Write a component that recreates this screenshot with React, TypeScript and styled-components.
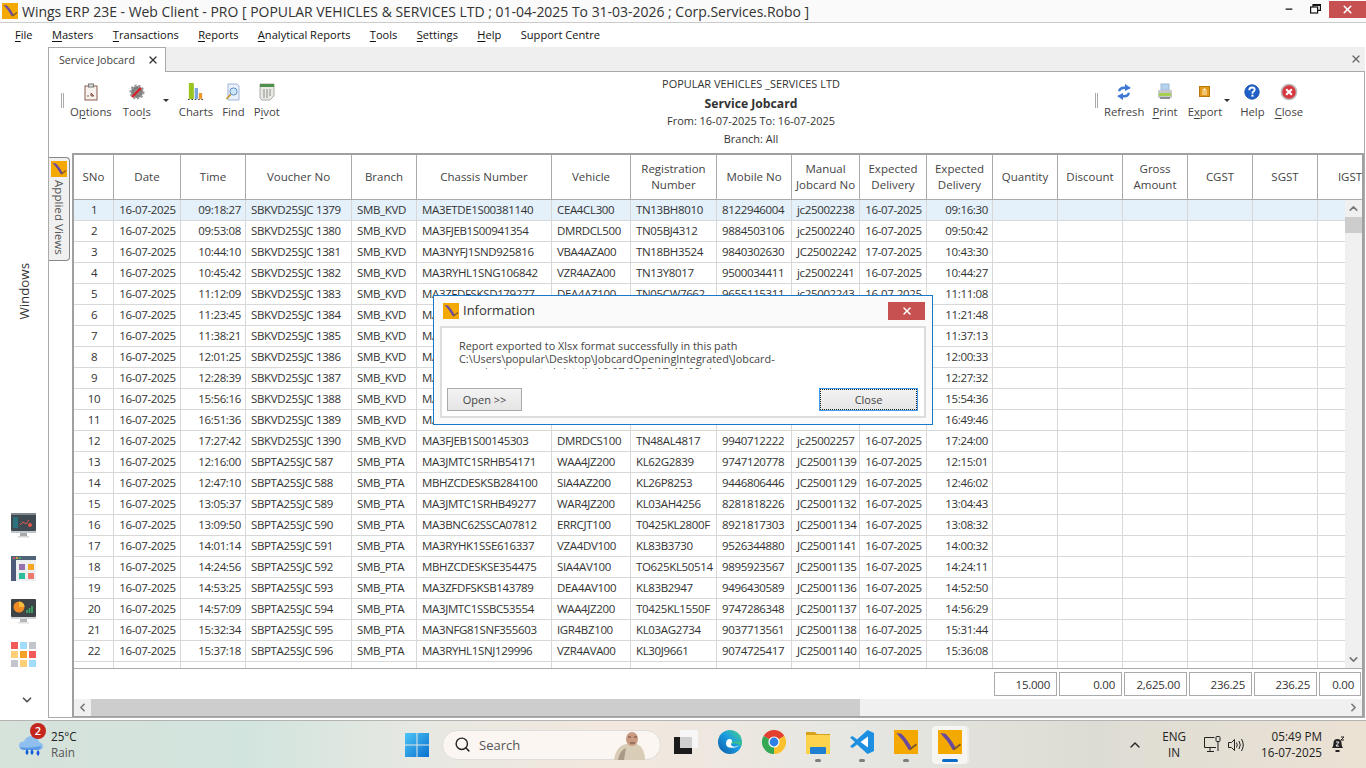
import React from 'react'
import styled, { createGlobalStyle } from 'styled-components'
import { ChevronUp, ChevronDown, ChevronLeft, ChevronRight, X, Minus, Search } from 'lucide-react'

const FONT = `"Open Sans", "Noto Sans", sans-serif`
const COLUMNS = '40px 67px 65px 106px 65px 135px 79px 86px 75px 68px 67px 66px 65px 65px 65px 65px 65px 65px'

const GlobalStyle = createGlobalStyle`
    html, body {
        margin: 0;
        padding: 0;
        background: #fff;
        overflow: hidden;
    }
    * {
        box-sizing: border-box;
    }
`

const Screen = styled.div`
    position: relative;
    width: 1366px;
    height: 768px;
    display: flex;
    flex-direction: column;
    overflow: hidden;
    font-family: ${FONT};
    font-size: 11.5px;
    color: #333;
    background: #fff;
`

const TitleBar = styled.div`
    height: 23px;
    flex: none;
    display: flex;
    align-items: center;
    background: #fafafa;
    border-bottom: 1px solid #ccc;
    padding-left: 2px;
`

const WindowTitle = styled.div`
    margin-left: 4px;
    font-size: 13.96px;
    color: #333;
    white-space: nowrap;
    flex: 1;
`

const WindowControl = styled.div<{ $close?: boolean }>`
    display: flex;
    align-items: center;
    justify-content: center;
    height: 17px;
    margin-top: ${({ $close }) => ($close ? '-3px' : '-4px')};
    width: ${({ $close }) => ($close ? '37px' : '27px')};
    background: ${({ $close }) => ($close ? '#c75050' : 'transparent')};
    color: ${({ $close }) => ($close ? '#fff' : '#111')};
`

const MenuBar = styled.div`
    height: 24px;
    flex: none;
    display: flex;
    align-items: center;
    gap: 19.4px;
    padding: 0 0 2px 15px;
    background: #fff;
    font-size: 11.1px;
    color: #111;
`

const Key = styled.span`
    text-decoration: underline;
    text-underline-offset: 2px;
`

const Body = styled.div`
    flex: none;
    height: 673px;
    display: flex;
    padding-bottom: 2px;
`

const SideBar = styled.div`
    width: 48px;
    flex: none;
    display: flex;
    flex-direction: column;
    align-items: center;
    padding-top: 216px;
`

const WindowsLabel = styled.div`
    writing-mode: vertical-rl;
    transform: rotate(180deg);
    font-size: 13.3px;
    color: #333;
`

const SideIcons = styled.div`
    margin-top: 193px;
    display: flex;
    flex-direction: column;
    gap: 18px;
    margin-right: 1px;
`

const SideChevron = styled.div`
    margin-top: 26px;
    margin-left: 6px;
    color: #555;
    height: 14px;
`

const Main = styled.div`
    width: 1317px;
    flex: none;
    display: flex;
    flex-direction: column;
    border-left: 1px solid #aaa;
    border-right: 1px solid #aaa;
    border-bottom: 1px solid #aaa;
`

const TabStrip = styled.div`
    height: 25px;
    flex: none;
    display: flex;
    align-items: stretch;
    justify-content: space-between;
    background: #efefef;
    border-bottom: 1px solid #aaa;
    margin-left: -1px;
    margin-right: -1px;
`

const Tab = styled.div`
    width: 118px;
    height: 25px;
    display: flex;
    align-items: center;
    justify-content: space-between;
    padding: 0 6px 0 10px;
    background: #fff;
    border: 1px solid #aaa;
    border-bottom: none;
    font-size: 10.7px;
    color: #444;
`

const TabStripClose = styled.div`
    display: flex;
    align-items: center;
    padding-right: 3px;
    color: #666;
`

const Toolbar = styled.div`
    height: 81px;
    flex: none;
    display: grid;
    grid-template-columns: 500px 404px 1fr;
`

const ToolGroup = styled.div<{ $inset: number }>`
    display: flex;
    align-items: flex-start;
    gap: 9px;
    padding-left: ${({ $inset }) => $inset}px;
    padding-top: 11px;
`

const Grip = styled.div`
    width: 3px;
    height: 15px;
    margin-top: 10px;
    margin-right: -3px;
    border-left: 1px solid #aaa;
    border-right: 1px solid #aaa;
`

const ToolButton = styled.div<{ $caret?: number; $after?: number }>`
    display: flex;
    flex-direction: column;
    align-items: center;
    gap: 3px;
    margin-right: ${({ $caret, $after }) => ($caret ? `${$caret + 1}px` : `${$after ?? 0}px`)};
    position: relative;
    font-size: 11.3px;
    color: #444;
    white-space: nowrap;

    &::after {
        content: "";
        display: ${({ $caret }) => ($caret ? 'block' : 'none')};
        position: absolute;
        right: ${({ $caret }) => -($caret ?? 0)}px;
        top: 16px;
        border-left: 3px solid transparent;
        border-right: 3px solid transparent;
        border-top: 3px solid #333;
    }
`

const ReportHead = styled.div`
    display: flex;
    flex-direction: column;
    align-items: center;
    padding-top: 3px;
    line-height: 18px;
    font-size: 10.95px;
    color: #333;
`

const ReportName = styled.div`
    font-size: 12.2px;
    font-weight: 700;
    line-height: 16px;
    padding-top: 3px;
    color: #333;
`

const Workspace = styled.div`
    flex: 1;
    min-height: 0;
    display: flex;
`

const Rail = styled.div`
    width: 23px;
    flex: none;
    padding-top: 4px;
`

const AppliedViews = styled.div`
    width: 21px;
    height: 104px;
    display: flex;
    flex-direction: column;
    align-items: center;
    gap: 3px;
    padding-top: 3px;
    background: #f0f0f0;
    border: 1px solid #888;
    border-left: none;
    border-radius: 0 4px 4px 0;
    font-size: 11.6px;
    color: #555;
`

const VerticalText = styled.span`
    writing-mode: vertical-rl;
    white-space: nowrap;
`

const GridBox = styled.div`
    flex: 1;
    min-width: 0;
    display: flex;
    flex-direction: column;
    border: 2px solid #a0a0a0;
    border-bottom-width: 1px;
`

const HeaderRow = styled.div`
    height: 45px;
    flex: none;
    display: grid;
    grid-template-columns: ${COLUMNS};
    overflow: hidden;
    border-bottom: 1px solid #aaa;
`

const HeaderCell = styled.div`
    display: flex;
    align-items: center;
    justify-content: center;
    text-align: center;
    line-height: 16px;
    border-right: 1px solid #aaa;
    color: #444;
    white-space: pre-line;
`

const RowsArea = styled.div`
    height: 469px;
    flex: none;
    display: flex;
    border-bottom: 1px solid #aaa;
`

const RowsViewport = styled.div`
    flex: 1;
    min-width: 0;
    overflow: hidden;
`

const Row = styled.div<{ $selected?: boolean }>`
    height: 21px;
    display: grid;
    grid-template-columns: ${COLUMNS};
    background: ${({ $selected }) => ($selected ? '#e4f0fa' : '#fff')};
    border-bottom: 1px solid #d8d8d8;
`

const Cell = styled.div<{ $align: string }>`
    display: flex;
    align-items: center;
    justify-content: ${({ $align }) => $align};
    padding: 0 4px 2px 5px;
    border-right: 1px solid #d8d8d8;
    color: #333;
    letter-spacing: -0.35px;
    white-space: nowrap;
    overflow: hidden;
`

const VScroll = styled.div`
    width: 17px;
    flex: none;
    display: flex;
    flex-direction: column;
    background: #f0f0f0;
`

const ScrollEnd = styled.div`
    width: 17px;
    height: 17px;
    flex: none;
    display: flex;
    align-items: center;
    justify-content: center;
    color: #777;
`

const VThumb = styled.div`
    height: 16px;
    flex: none;
    background: #cdcdcd;
`

const ScrollGap = styled.div`
    flex: 1;
`

const TotalsRow = styled.div`
    height: 30px;
    flex: none;
    display: grid;
    grid-template-columns: ${COLUMNS};
    align-items: start;
    padding-top: 3px;
    overflow: hidden;
`

const TotalBox = styled.div<{ $column: number; $narrow?: boolean }>`
    grid-column: ${({ $column }) => $column};
    height: 24px;
    margin: 0 1px;
    width: ${({ $narrow }) => ($narrow ? '42px' : 'auto')};
    display: flex;
    align-items: center;
    justify-content: flex-end;
    padding-right: 6px;
    border: 1px solid #aaa;
    color: #333;
    letter-spacing: -0.25px;
`

const HScroll = styled.div`
    height: 17px;
    flex: none;
    display: flex;
    background: #f0f0f0;
`

const HThumb = styled.div`
    width: 769px;
    flex: none;
    background: #cdcdcd;
`

const Taskbar = styled.div`
    height: 48px;
    flex: none;
    display: grid;
    grid-template-columns: 405px 570px 1fr;
    align-items: center;
    border-top: 1px solid #b4b4b4;
    background: linear-gradient(90deg, #d6e2da 0%, #d2e4de 18%, #e6e8e2 30%, #f3e8de 45%, #e6e7e2 62%, #dddcd4 80%, #ece2d4 100%);
`

const Weather = styled.div`
    display: flex;
    align-items: center;
    gap: 8px;
    padding: 0 0 2px 19px;
    font-size: 11.7px;
    line-height: 16px;
    color: #222;
`

const WeatherIcon = styled.div`
    position: relative;
    width: 24px;
    height: 22px;
    margin-top: 4px;
`

const Badge = styled.div`
    position: absolute;
    left: 11px;
    top: -12px;
    width: 16px;
    height: 16px;
    border-radius: 50%;
    background: #c4261d;
    color: #fff;
    font-size: 11px;
    font-weight: 600;
    line-height: 16px;
    text-align: center;
`

const Muted = styled.div`
    color: #555;
`

const CenterIcons = styled.div`
    display: flex;
    align-items: center;
`

const SearchPill = styled.div`
    position: relative;
    flex: none;
    width: 219px;
    height: 30px;
    margin: 0 3px 0 13px;
    display: flex;
    align-items: center;
    gap: 8px;
    padding-left: 11px;
    border: 1px solid #ddd;
    border-radius: 15px;
    background: #fbf6f1;
    font-size: 13px;
    color: #555;
`

const SearchArt = styled.div`
    position: absolute;
    right: 14px;
    top: 1px;
`

const TaskSlot = styled.div<{ $active?: boolean }>`
    position: relative;
    flex: none;
    width: 44px;
    height: 38px;
    display: flex;
    align-items: center;
    justify-content: center;
    padding-bottom: 6px;

    &::before {
        content: "";
        display: ${({ $active }) => ($active ? 'block' : 'none')};
        position: absolute;
        left: 4px;
        right: 5px;
        top: 0;
        bottom: 0;
        background: #f6f5f2;
        border-radius: 4px;
        box-shadow: 2px 0 0 #eeede9;
    }

    svg {
        position: relative;
    }
`

const RunDot = styled.div<{ $active?: boolean }>`
    position: absolute;
    bottom: 2px;
    left: 50%;
    transform: translateX(-50%);
    height: 3px;
    width: ${({ $active }) => ($active ? '16px' : '6px')};
    border-radius: 2px;
    background: ${({ $active }) => ($active ? '#0a6cc9' : '#7d7d7d')};
`

const Tray = styled.div`
    display: flex;
    align-items: center;
    justify-content: flex-end;
    padding-right: 21px;
    font-size: 11.7px;
    color: #222;
`

const TrayColumn = styled.div<{ $align: string; $gap: number }>`
    display: flex;
    flex-direction: column;
    align-items: ${({ $align }) => $align};
    line-height: 16px;
    padding-bottom: 2px;
    margin-left: ${({ $gap }) => $gap}px;
`

const TrayIcon = styled.div<{ $gap: number }>`
    display: flex;
    margin-left: ${({ $gap }) => $gap}px;
`

const Dialog = styled.div`
    position: absolute;
    left: 433px;
    top: 295px;
    width: 500px;
    height: 130px;
    display: flex;
    flex-direction: column;
    background: #fafafa;
    border: 1px solid #1a78c8;
    padding: 6px 6px 6px 6px;
`

const DialogTitle = styled.div`
    height: 18px;
    flex: none;
    display: flex;
    align-items: center;
    gap: 4px;
    padding-left: 3px;
    font-size: 13px;
    color: #333;
`

const DialogTitleText = styled.div`
    flex: 1;
    padding-bottom: 2px;
`

const DialogClose = styled.div`
    width: 37px;
    height: 18px;
    margin-right: 1px;
    display: flex;
    align-items: center;
    justify-content: center;
    background: #c75050;
    color: #fff;
`

const DialogBody = styled.div`
    flex: 1;
    margin-top: 6px;
    display: flex;
    flex-direction: column;
    background: #fff;
    border: 2px solid #ddd;
    padding: 11px 5px 5px 5px;
`

const DialogText = styled.div`
    height: 30px;
    margin-left: 12px;
    overflow: hidden;
    line-height: 13px;
    font-size: 10.85px;
    color: #444;
    white-space: nowrap;
`

const DialogActions = styled.div`
    display: flex;
    justify-content: space-between;
    margin-top: auto;
`

const DialogButton = styled.div<{ $focused?: boolean }>`
    position: relative;
    height: 23px;
    width: ${({ $focused }) => ($focused ? '99px' : '75px')};
    display: flex;
    align-items: center;
    justify-content: center;
    margin-right: ${({ $focused }) => ($focused ? '1px' : '0')};
    border: 1px solid ${({ $focused }) => ($focused ? '#3f9bf0' : '#aaa')};
    background: linear-gradient(#f3f3f3, #e5e5e5);
    outline: ${({ $focused }) => ($focused ? '1px dotted #222' : 'none')};
    outline-offset: ${({ $focused }) => ($focused ? '-2px' : '0')};
    font-size: 11px;
    color: #444;
`

const WingsLogo = ({ size }: { size: number }) => (
    <svg width={size} height={size} viewBox="0 0 16 16" style={{ flex: 'none' }}>
        <rect width="16" height="16" fill="#f3a900" />
        <path d="M1.5 2 L5 2.5 Q9.5 7 12 12.5 L10 13.5 Q6.5 7 1.5 2Z" fill="#6a4a9d" />
        <path d="M10.5 13 L15 9.5" stroke="#7d5a2a" strokeWidth="1.2" fill="none" />
    </svg>
)

const OptionsIcon = () => (
    <svg width="16" height="18" viewBox="0 0 16 18">
        <rect x="2" y="3" width="12" height="14" fill="#f7f2ee" stroke="#8a5a50" />
        <rect x="5.5" y="1" width="5" height="3" fill="#ddd" stroke="#777" />
        <path d="M4 13h2M8 10l3 3H8z" stroke="#8a5a50" fill="#b88" />
    </svg>
)

const ToolsIcon = () => (
    <svg width="18" height="18" viewBox="0 0 18 18">
        <circle cx="9" cy="9" r="6" fill="#777" stroke="#999" strokeWidth="3" strokeDasharray="2 1.6" />
        <circle cx="9" cy="9" r="3.5" fill="#8a8a8a" />
        <path d="M4 14 L13 5" stroke="#d8232a" strokeWidth="2.4" />
    </svg>
)

const ChartsIcon = () => (
    <svg width="15" height="18" viewBox="0 0 18 18" preserveAspectRatio="none">
        <rect x="1" y="0" width="6" height="16" fill="#9cc41f" />
        <rect x="8" y="5" width="4" height="11" fill="#7ea6de" />
        <rect x="13" y="10" width="4" height="6" fill="#ef9a2a" />
        <path d="M0 16.5h18" stroke="#333" strokeDasharray="2 2" />
    </svg>
)

const FindIcon = () => (
    <svg width="16" height="18" viewBox="0 0 16 18">
        <path d="M3 1h9l2 2v14H3z" fill="#eaf1fb" stroke="#9fb6d8" />
        <circle cx="8.5" cy="8.5" r="3.6" fill="#cfe6f8" stroke="#5f8fc9" />
        <path d="M5.6 11.4 L1.5 16" stroke="#c9962f" strokeWidth="1.6" />
    </svg>
)

const PivotIcon = () => (
    <svg width="16" height="18" viewBox="0 0 16 18">
        <path d="M1 1h14v12l-4 4H3l-2-2z" fill="#e9e9e3" stroke="#aaa" />
        <rect x="1" y="1" width="14" height="3" fill="#4f8f4c" />
        <path d="M5 6v9M8 6v9M11 6v7" stroke="#8a8a8a" />
    </svg>
)

const RefreshIcon = () => (
    <svg width="16" height="18" viewBox="0 0 16 18">
        <path d="M2 8 Q3 3 9 3.5 L9 1 L15 5 L9 8 L9 6 Q5 5.5 4 8.5Z" fill="#3f78d6" />
        <path d="M14 10 Q13 15 7 14.5 L7 17 L1 13 L7 10 L7 12 Q11 12.5 12 9.5Z" fill="#3f78d6" />
    </svg>
)

const PrintIcon = () => (
    <svg width="16" height="18" viewBox="0 0 16 18">
        <rect x="4" y="1" width="8" height="6" fill="#b5d2ee" stroke="#9db9d4" />
        <rect x="1" y="7" width="14" height="8" rx="1" fill="#c4c8cc" />
        <rect x="2" y="10" width="12" height="3" fill="#a8d050" />
        <rect x="3" y="14" width="10" height="2" fill="#8b8f93" />
    </svg>
)

const ExportIcon = () => (
    <svg width="14" height="18" viewBox="0 0 14 18">
        <rect x="1.5" y="3.5" width="10" height="10" fill="#e29b1f" stroke="#b97710" />
        <path d="M6.5 5l2.5 2.5h-5z" fill="#fff3cf" />
        <path d="M4 9h5M4 11h5" stroke="#fff3cf" />
    </svg>
)

const HelpIcon = () => (
    <svg width="18" height="18" viewBox="-1 -1 20 20">
        <circle cx="9" cy="9" r="8" fill="#1f5fc9" stroke="#184ea6" />
        <path d="M6 7 Q6 4 9 4 Q12 4 12 6.5 Q12 8 9.6 9.3 V11" stroke="#fff" strokeWidth="2" fill="none" />
        <rect x="8.4" y="12" width="2.2" height="2.2" fill="#fff" />
    </svg>
)

const CloseIcon = () => (
    <svg width="18" height="18" viewBox="-.5 -.5 19 19">
        <circle cx="9" cy="9" r="8" fill="#d7383f" stroke="#bdbdbd" strokeWidth="1.6" />
        <path d="M6 6l6 6M12 6l-6 6" stroke="#fff" strokeWidth="2.2" />
    </svg>
)

const DashMonitor = () => (
    <svg width="25" height="25" viewBox="0 0 25 25">
        <rect x="0" y="0" width="25" height="18" rx="1" fill="#3f4a52" />
        <rect x="0" y="0" width="25" height="2" fill="#7d878d" />
        <rect x="2" y="4" width="5" height="11" fill="#2c6f7d" />
        <path d="M9 12l3-3 3 2 3-4" stroke="#e2584a" fill="none" />
        <circle cx="19" cy="12" r="2" fill="#e2584a" />
        <rect x="0" y="18" width="25" height="2" fill="#c4c8ca" />
        <rect x="9" y="20" width="7" height="3" fill="#a7abad" />
        <rect x="7" y="23" width="11" height="1.5" fill="#d3d5d6" />
    </svg>
)

const AppWindow = () => (
    <svg width="25" height="25" viewBox="0 0 25 25">
        <rect x="0" y="0" width="25" height="25" fill="#eceeef" />
        <rect x="0" y="0" width="25" height="4" fill="#4f6476" />
        <rect x="0" y="4" width="5" height="21" fill="#4b5a7a" />
        <circle cx="3" cy="2" r="1" fill="#ef5350" />
        <circle cx="6" cy="2" r="1" fill="#f4b42d" />
        <circle cx="9" cy="2" r="1" fill="#54b36a" />
        <rect x="8" y="8" width="6" height="6" fill="#9671ad" />
        <rect x="17" y="8" width="6" height="6" fill="#f5a623" />
        <rect x="8" y="17" width="6" height="6" fill="#2dbd9b" />
        <rect x="17" y="17" width="6" height="6" fill="#f0776c" />
    </svg>
)

const PieMonitor = () => (
    <svg width="25" height="25" viewBox="0 0 25 25">
        <rect x="0" y="0" width="25" height="18" rx="1" fill="#3e4348" />
        <circle cx="8" cy="8" r="5.5" fill="#f08a24" />
        <path d="M8 8V2.5A5.5 5.5 0 0 1 13.5 8z" fill="#f6bd3a" />
        <path d="M16 14v-3M18.5 14v-5M21 14v-7" stroke="#3fae6a" strokeWidth="1.6" />
        <rect x="0" y="18" width="25" height="2" fill="#d3d6d8" />
        <rect x="9" y="20" width="7" height="3" fill="#b3b6b8" />
        <rect x="7" y="23" width="11" height="1.5" fill="#dedfe0" />
    </svg>
)

const ColorGrid = () => {
    const colors = ['#f25a5a', '#a3dcfa', '#c2c6cc', '#fdcf78', '#f7a128', '#f25a5a', '#c2c6cc', '#fdcf78', '#a3dcfa']
    return (
        <svg width="25" height="25" viewBox="0 0 25 25">
            {colors.map((c, i) => (
                <rect key={i} x={(i % 3) * 9} y={Math.floor(i / 3) * 9} width="7" height="7" fill={c} />
            ))}
        </svg>
    )
}

const RainCloud = () => (
    <svg width="24" height="22" viewBox="0 0 24 22">
        <path d="M6 15 Q0 15 0 10.5 Q0 6.5 5 6.5 Q7 1 13 1 Q19 1 20 7 Q24 8 24 11.5 Q24 15 19 15Z" fill="#8ebfee" />
        <path d="M5 15 Q2 15 1 12 Q8 14 22 11 Q22 15 18 15Z" fill="#5c9be4" />
        <path d="M8 14 q3 3.5 0 6 q-3 -2.5 0 -6z M13 14 q3 3.5 0 6 q-3 -2.5 0 -6z" fill="#0f5fd8" />
        <path d="M19 15 q3 3 0 6 q-3 -3 0 -6z" fill="#1a56e0" />
    </svg>
)

const WinLogo = () => (
    <svg width="24" height="24" viewBox="0 0 24 24" style={{ flex: 'none' }}>
        <defs>
            <linearGradient id="wl" x1="0" y1="0" x2="1" y2="1">
                <stop offset="0" stopColor="#4cc6f7" />
                <stop offset="1" stopColor="#0a6fd0" />
            </linearGradient>
        </defs>
        <path d="M0 0h11.5v11.5H0zM12.5 0H24v11.5H12.5zM0 12.5h11.5V24H0zM12.5 12.5H24V24H12.5z" fill="url(#wl)" />
    </svg>
)

const BingArt = () => (
    <svg width="34" height="29" viewBox="0 0 34 29">
        <path d="M2 28 Q4 14 14 12 L25 12 Q33 16 33 28Z" fill="#d9cdb8" />
        <path d="M6 28 Q8 18 14 16 L12 28Z" fill="#a89a86" />
        <ellipse cx="20" cy="7" rx="6" ry="7" fill="#c99a80" />
        <path d="M16 5h3M22 5h3M18 11h5" stroke="#6d4a3a" />
    </svg>
)

const TaskViewIcon = () => (
    <svg width="24" height="24" viewBox="0 0 24 24">
        <rect x="0" y="7" width="18" height="17" fill="#1b1b1b" />
        <rect x="6" y="0" width="18" height="18" rx="1" fill="#f6f6f6" />
        <rect x="6" y="7" width="12" height="11" fill="#cfcfcf" />
    </svg>
)

const EdgeIcon = () => (
    <svg width="24" height="24" viewBox="0 0 24 24">
        <defs>
            <linearGradient id="eg" x1="0" y1="1" x2="1" y2="0">
                <stop offset="0" stopColor="#0c59a4" />
                <stop offset="0.55" stopColor="#1b9de2" />
                <stop offset="1" stopColor="#4ed37f" />
            </linearGradient>
        </defs>
        <circle cx="12" cy="12" r="12" fill="url(#eg)" />
        <path d="M12 9 Q8 9 8 14 Q9 19 17 17.5 Q19 17 21 15 Q17 18 14 16 Q12 14.5 14 12.5 Q15 10 12 9Z" fill="#fff" />
        <path d="M13.5 12 Q20 11 24 12.5 L23 16 Q19 12 14 14Z" fill="#39c28a" />
    </svg>
)

const ChromeIcon = () => (
    <svg width="24" height="24" viewBox="0 0 24 24">
        <path d="M12 12 L1.6 6 A12 12 0 0 1 22.4 6Z" fill="#e3402f" />
        <path d="M12 12 L22.4 6 A12 12 0 0 1 12 24Z" fill="#fbc02d" />
        <path d="M12 12 L12 24 A12 12 0 0 1 1.6 6Z" fill="#34a853" />
        <circle cx="12" cy="12" r="5.6" fill="#fff" />
        <circle cx="12" cy="12" r="4.4" fill="#2f7fe8" />
    </svg>
)

const FolderIcon = () => (
    <svg width="24" height="24" viewBox="0 0 24 24">
        <path d="M0 2h9l2 2h13v20H0z" fill="#d6a21e" />
        <rect x="0" y="5" width="24" height="19" rx="1" fill="#fbd34c" />
        <rect x="4" y="17" width="16" height="7" rx="1" fill="#1f7fd0" />
    </svg>
)

const VsCodeIcon = () => (
    <svg width="24" height="24" viewBox="0 0 24 24">
        <path d="M17.5 0 L24 3v18l-6.5 3L7 14.5 2.5 18 0 16.5 5 12 0 7.5 2.5 6 7 9.5z" fill="#1c8fe0" />
        <path d="M18 6.5 L10.5 12 18 17.5z" fill="#fff" />
    </svg>
)

const MonitorGlyph = () => (
    <svg width="17" height="17" viewBox="0 0 17 17" fill="none" stroke="#222">
        <path d="M12 11.5H.5v-10h10" />
        <path d="M3 15.5h7M6 12v3" />
        <rect x="12" y=".5" width="4" height="5" rx="1" />
        <path d="M14 6v9" />
    </svg>
)

const SpeakerGlyph = () => (
    <svg width="17" height="14" viewBox="0 0 17 14" fill="none" stroke="#222">
        <path d="M.5 4.5h3l3-3v11l-3-3h-3z" />
        <path d="M8.5 4.5q1.5 2.5 0 5M11 3q2.5 4 0 8M13.5 1q3.5 6 0 12" />
    </svg>
)

const BellGlyph = () => (
    <svg width="14" height="17" viewBox="0 0 14 17">
        <path d="M1 12 Q2.5 10 2.5 7 Q2.5 3 6.5 3 Q10.5 3 10.5 7 Q10.5 10 12 12Z" fill="#222" />
        <rect x="4.5" y="14" width="4" height="2" fill="#222" />
        <path d="M5 6h3l-3 4h3" stroke="#eee" fill="none" />
        <path d="M10 1h3l-3 3h3" stroke="#222" fill="none" />
    </svg>
)

const RestoreGlyph = () => (
    <svg width="11" height="10" viewBox="0 0 11 10" fill="none" stroke="#111" strokeWidth="1.2">
        <rect x=".6" y="3" width="7" height="6" />
        <path d="M3 3V.6h7.4v5.8H8" />
        <path d="M3 1.2h7" strokeWidth="1.5" />
    </svg>
)

const headers = [
    'SNo', 'Date', 'Time', 'Voucher No', 'Branch', 'Chassis Number', 'Vehicle', 'Registration\nNumber',
    'Mobile No', 'Manual\nJobcard No', 'Expected\nDelivery', 'Expected\nDelivery', 'Quantity', 'Discount',
    'Gross\nAmount', 'CGST', 'SGST', 'IGST',
]

const KVD = 'SMB_KVD'
const PTA = 'SMB_PTA'
const DAY = '16-07-2025'

// time, voucher, branch, chassis, vehicle, reg, mobile, manual, delivery date, delivery time
const rows: string[][] = [
    ['09:18:27', 'SBKVD25SJC 1379', KVD, 'MA3ETDE1S00381140', 'CEA4CL300', 'TN13BH8010', '8122946004', 'jc25002238', DAY, '09:16:30'],
    ['09:53:08', 'SBKVD25SJC 1380', KVD, 'MA3FJEB1S00941354', 'DMRDCL500', 'TN05BJ4312', '9884503106', 'jc25002240', DAY, '09:50:42'],
    ['10:44:10', 'SBKVD25SJC 1381', KVD, 'MA3NYFJ1SND925816', 'VBA4AZA00', 'TN18BH3524', '9840302630', 'JC25002242', '17-07-2025', '10:43:30'],
    ['10:45:42', 'SBKVD25SJC 1382', KVD, 'MA3RYHL1SNG106842', 'VZR4AZA00', 'TN13Y8017', '9500034411', 'jc25002241', DAY, '10:44:27'],
    ['11:12:09', 'SBKVD25SJC 1383', KVD, 'MA3ZFDFSKSD179277', 'DEA4AZ100', 'TN05CW7662', '9655115311', 'jc25002243', DAY, '11:11:08'],
    ['11:23:45', 'SBKVD25SJC 1384', KVD, 'MA3', '', '', '', '', '', '11:21:48'],
    ['11:38:21', 'SBKVD25SJC 1385', KVD, 'MA3', '', '', '', '', '', '11:37:13'],
    ['12:01:25', 'SBKVD25SJC 1386', KVD, 'MA3', '', '', '', '', '', '12:00:33'],
    ['12:28:39', 'SBKVD25SJC 1387', KVD, 'MA3', '', '', '', '', '', '12:27:32'],
    ['15:56:16', 'SBKVD25SJC 1388', KVD, 'MA3', '', '', '', '', '', '15:54:36'],
    ['16:51:36', 'SBKVD25SJC 1389', KVD, 'MA3', '', '', '', '', '', '16:49:46'],
    ['17:27:42', 'SBKVD25SJC 1390', KVD, 'MA3FJEB1S00145303', 'DMRDCS100', 'TN48AL4817', '9940712222', 'jc25002257', DAY, '17:24:00'],
    ['12:16:00', 'SBPTA25SJC 587', PTA, 'MA3JMTC1SRHB54171', 'WAA4JZ200', 'KL62G2839', '9747120778', 'JC25001139', DAY, '12:15:01'],
    ['12:47:10', 'SBPTA25SJC 588', PTA, 'MBHZCDESKSB284100', 'SIA4AZ200', 'KL26P8253', '9446806446', 'JC25001129', DAY, '12:46:02'],
    ['13:05:37', 'SBPTA25SJC 589', PTA, 'MA3JMTC1SRHB49277', 'WAR4JZ200', 'KL03AH4256', '8281818226', 'JC25001132', DAY, '13:04:43'],
    ['13:09:50', 'SBPTA25SJC 590', PTA, 'MA3BNC62SSCA07812', 'ERRCJT100', 'T0425KL2800F', '8921817303', 'JC25001134', DAY, '13:08:32'],
    ['14:01:14', 'SBPTA25SJC 591', PTA, 'MA3RYHK1SSE616337', 'VZA4DV100', 'KL83B3730', '9526344880', 'JC25001141', DAY, '14:00:32'],
    ['14:24:56', 'SBPTA25SJC 592', PTA, 'MBHZCDESKSE354475', 'SIA4AV100', 'TO625KL50514', '9895923567', 'JC25001135', DAY, '14:24:11'],
    ['14:53:25', 'SBPTA25SJC 593', PTA, 'MA3ZFDFSKSB143789', 'DEA4AV100', 'KL83B2947', '9496430589', 'JC25001136', DAY, '14:52:50'],
    ['14:57:09', 'SBPTA25SJC 594', PTA, 'MA3JMTC1SSBC53554', 'WAA4JZ200', 'T0425KL1550F', '9747286348', 'JC25001137', DAY, '14:56:29'],
    ['15:32:34', 'SBPTA25SJC 595', PTA, 'MA3NFG81SNF355603', 'IGR4BZ100', 'KL03AG2734', '9037713561', 'JC25001138', DAY, '15:31:44'],
    ['15:37:18', 'SBPTA25SJC 596', PTA, 'MA3RYHL1SNJ129996', 'VZR4AVA00', 'KL30J9661', '9074725417', 'JC25001140', DAY, '15:36:08'],
    ['09:55:50', 'SBPKD25SJC 747', 'SMB_PKD', 'MBJ4CTGP5SN001974', 'SRA4FT100', 'KL09AJ8280', '8891477452', 'JC25001058', DAY, '10:00:00'],
]

const alignFor = (j: number) => {
    if (j === 0 || j === 9) return 'flex-end'
    if (j === 8) return 'center'
    return 'flex-start'
}

const menus: [string, string][] = [
    ['F', 'ile'], ['M', 'asters'], ['T', 'ransactions'], ['R', 'eports'], ['A', 'nalytical Reports'],
    ['T', 'ools'], ['S', 'ettings'], ['H', 'elp'],
]

const totals = [
    { column: 13, value: '15.000' },
    { column: 14, value: '0.00' },
    { column: 15, value: '2,625.00' },
    { column: 16, value: '236.25' },
    { column: 17, value: '236.25' },
    { column: 18, value: '0.00', narrow: true },
]

const App = () => {
    return (
        <Screen>
            <GlobalStyle />
            <TitleBar>
                <WingsLogo size={16} />
                <WindowTitle>Wings ERP 23E - Web Client - PRO [ POPULAR VEHICLES &amp; SERVICES LTD ; 01-04-2025 To 31-03-2026 ; Corp.Services.Robo ]</WindowTitle>
                <WindowControl><Minus size={10} strokeWidth={3} /></WindowControl>
                <WindowControl><RestoreGlyph /></WindowControl>
                <WindowControl $close><X size={13} strokeWidth={3} /></WindowControl>
            </TitleBar>
            <MenuBar>
                {menus.map(([key, rest]) => (
                    <span key={key + rest}><Key>{key}</Key>{rest}</span>
                ))}
                <span>Support Centre</span>
            </MenuBar>
            <Body>
                <SideBar>
                    <WindowsLabel>Windows</WindowsLabel>
                    <SideIcons>
                        <DashMonitor />
                        <AppWindow />
                        <PieMonitor />
                        <ColorGrid />
                    </SideIcons>
                    <SideChevron><ChevronDown size={14} strokeWidth={3} /></SideChevron>
                </SideBar>
                <Main>
                    <TabStrip>
                        <Tab>
                            Service Jobcard
                            <X size={12} strokeWidth={2.6} color="#333" />
                        </Tab>
                        <TabStripClose><X size={12} strokeWidth={2.4} /></TabStripClose>
                    </TabStrip>
                    <Toolbar>
                        <ToolGroup $inset={12}>
                            <Grip />
                            <ToolButton $after={2}><OptionsIcon /><span>O<Key>p</Key>tions</span></ToolButton>
                            <ToolButton $caret={18}><ToolsIcon /><span>Too<Key>l</Key>s</span></ToolButton>
                            <ToolButton><ChartsIcon /><span>Charts</span></ToolButton>
                            <ToolButton><FindIcon /><span>Find</span></ToolButton>
                            <ToolButton><PivotIcon /><span>P<Key>i</Key>vot</span></ToolButton>
                        </ToolGroup>
                        <ReportHead>
                            <div>POPULAR VEHICLES _SERVICES LTD</div>
                            <ReportName>Service Jobcard</ReportName>
                            <div>From: 16-07-2025 To: 16-07-2025</div>
                            <div>Branch: All</div>
                        </ReportHead>
                        <ToolGroup $inset={142}>
                            <Grip />
                            <ToolButton $after={-1}><RefreshIcon /><span>Refresh</span></ToolButton>
                            <ToolButton $after={1}><PrintIcon /><span><Key>P</Key>rint</span></ToolButton>
                            <ToolButton $caret={8}><ExportIcon /><span>E<Key>x</Key>port</span></ToolButton>
                            <ToolButton $after={1}><HelpIcon /><span>Help</span></ToolButton>
                            <ToolButton><CloseIcon /><span><Key>C</Key>lose</span></ToolButton>
                        </ToolGroup>
                    </Toolbar>
                    <Workspace>
                        <Rail>
                            <AppliedViews>
                                <WingsLogo size={16} />
                                <VerticalText>Applied Views</VerticalText>
                            </AppliedViews>
                        </Rail>
                        <GridBox>
                            <HeaderRow>
                                {headers.map((h, i) => (
                                    <HeaderCell key={i}>{h}</HeaderCell>
                                ))}
                            </HeaderRow>
                            <RowsArea>
                                <RowsViewport>
                                    {rows.map((r, i) => (
                                        <Row key={i} $selected={i === 0}>
                                            <Cell $align="center">{i + 1}</Cell>
                                            <Cell $align="center">{DAY}</Cell>
                                            {r.map((v, j) => (
                                                <Cell key={j} $align={alignFor(j)}>{v}</Cell>
                                            ))}
                                            {['q', 'd', 'g', 'c', 's', 'i'].map((c) => (
                                                <Cell key={c} $align="flex-end" />
                                            ))}
                                        </Row>
                                    ))}
                                </RowsViewport>
                                <VScroll>
                                    <ScrollEnd><ChevronUp size={13} strokeWidth={3} /></ScrollEnd>
                                    <VThumb />
                                    <ScrollGap />
                                    <ScrollEnd><ChevronDown size={13} strokeWidth={3} /></ScrollEnd>
                                </VScroll>
                            </RowsArea>
                            <TotalsRow>
                                {totals.map((t) => (
                                    <TotalBox key={t.column} $column={t.column} $narrow={t.narrow}>{t.value}</TotalBox>
                                ))}
                            </TotalsRow>
                            <HScroll>
                                <ScrollEnd><ChevronLeft size={13} strokeWidth={3} /></ScrollEnd>
                                <HThumb />
                                <ScrollGap />
                                <ScrollEnd><ChevronRight size={13} strokeWidth={3} /></ScrollEnd>
                            </HScroll>
                        </GridBox>
                    </Workspace>
                </Main>
            </Body>
            <Taskbar>
                <Weather>
                    <WeatherIcon>
                        <RainCloud />
                        <Badge>2</Badge>
                    </WeatherIcon>
                    <div>
                        <div>25°C</div>
                        <Muted>Rain</Muted>
                    </div>
                </Weather>
                <CenterIcons>
                    <WinLogo />
                    <SearchPill>
                        <Search size={17} strokeWidth={2} color="#222" />
                        Search
                        <SearchArt><BingArt /></SearchArt>
                    </SearchPill>
                    <TaskSlot><TaskViewIcon /></TaskSlot>
                    <TaskSlot><EdgeIcon /></TaskSlot>
                    <TaskSlot><ChromeIcon /></TaskSlot>
                    <TaskSlot><FolderIcon /><RunDot /></TaskSlot>
                    <TaskSlot><VsCodeIcon /><RunDot /></TaskSlot>
                    <TaskSlot><WingsLogo size={24} /><RunDot /></TaskSlot>
                    <TaskSlot $active><WingsLogo size={24} /><RunDot $active /></TaskSlot>
                </CenterIcons>
                <Tray>
                    <ChevronUp size={16} strokeWidth={2} color="#222" />
                    <TrayColumn $align="center" $gap={19}>
                        <div>ENG</div>
                        <div>IN</div>
                    </TrayColumn>
                    <TrayIcon $gap={18}><MonitorGlyph /></TrayIcon>
                    <TrayIcon $gap={7}><SpeakerGlyph /></TrayIcon>
                    <TrayColumn $align="flex-end" $gap={16}>
                        <div>05:49 PM</div>
                        <div>16-07-2025</div>
                    </TrayColumn>
                    <TrayIcon $gap={9}><BellGlyph /></TrayIcon>
                </Tray>
            </Taskbar>
            <Dialog>
                <DialogTitle>
                    <WingsLogo size={16} />
                    <DialogTitleText>Information</DialogTitleText>
                    <DialogClose><X size={12} strokeWidth={3} /></DialogClose>
                </DialogTitle>
                <DialogBody>
                    <DialogText>
                        Report exported to Xlsx format successfully in this path<br />
                        C:\Users\popular\Desktop\JobcardOpeningIntegrated\Jobcard-<br />
                        opening-integrated-details-16-07-2025-17-49-09.xlsx
                    </DialogText>
                    <DialogActions>
                        <DialogButton>Open &gt;&gt;</DialogButton>
                        <DialogButton $focused>Close</DialogButton>
                    </DialogActions>
                </DialogBody>
            </Dialog>
        </Screen>
    )
}

export default App
